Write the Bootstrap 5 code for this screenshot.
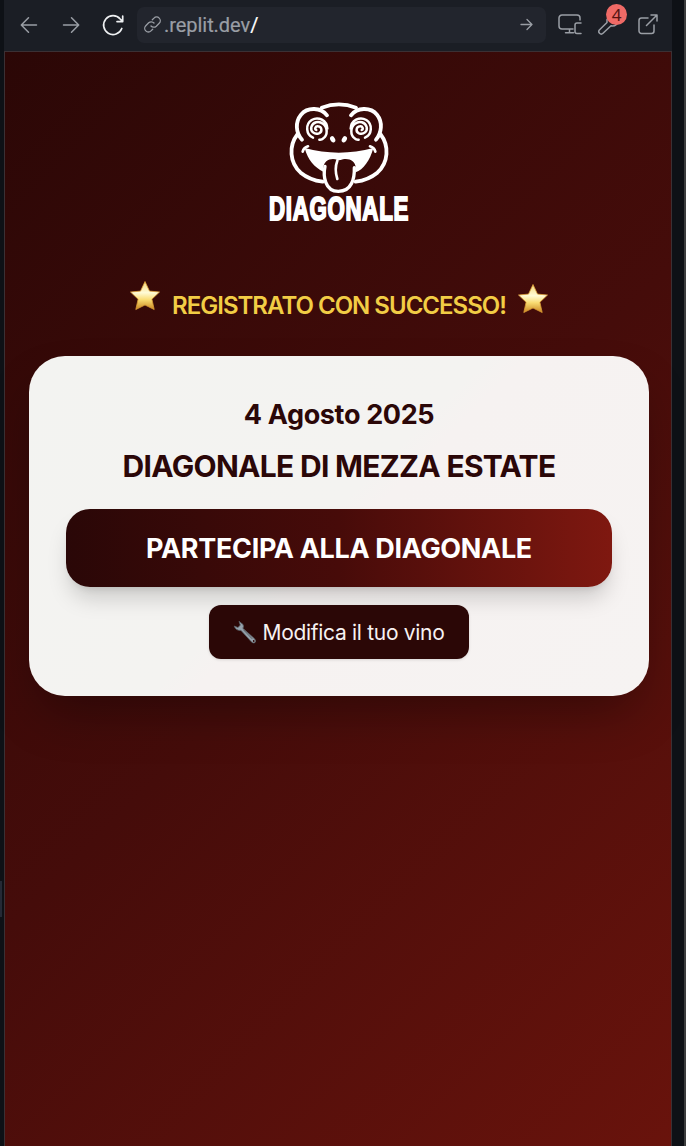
<!DOCTYPE html>
<html lang="it">
<head>
<meta charset="utf-8">
<meta name="viewport" content="width=device-width, initial-scale=1">
<title>Diagonale</title>
<link href="https://cdn.jsdelivr.net/npm/bootstrap@5.3.0/dist/css/bootstrap.min.css" rel="stylesheet">
<script defer src="https://cdn.jsdelivr.net/npm/bootstrap@5.3.0/dist/js/bootstrap.bundle.min.js"></script>
<style>
body{background:#0e1116;font-family:Inter,"Liberation Sans",sans-serif;height:1146px;overflow:hidden;border-right:2px solid #3c3d3e}
.edge{width:4px}
.handle{margin-top:881px;height:36px;width:2px;background:#252a36}
.pane{width:668px;height:1146px}
.bar{height:51px;background:#1b1e25;color:#9a9ea5;padding-bottom:2px}
.bar svg{display:block;fill:none;stroke:currentColor;stroke-width:1.5;stroke-linecap:round;stroke-linejoin:round}
.back{margin-left:16px}
.fwd{margin-left:24px}
.reload{margin-left:21px;color:#eef0f2}
.devices{margin-left:12px}
.tools{margin-left:15px}
.popout{margin-left:18px}
.addr{margin-left:12px;width:409px;height:36px;background:#22252d;border-radius:7px;padding:0 13px 0 7px}
.url{font:20px/36px Roboto,"Liberation Sans",sans-serif;letter-spacing:-.05px;margin-left:3px;-webkit-text-stroke:.2px}
.count{position:absolute;left:8px;top:-11px;width:21px;height:21px;border-radius:50%;background:#ef6a66;color:#541412;font:17px/21px "Noto Sans",sans-serif;text-align:center}
.page{background:linear-gradient(135deg,#2b0706 0%,#450c0a 50%,#69130c 100%);border:1px solid #3b3034;border-bottom:0;padding:38px 22px 0 24px}
.logo{display:block;margin:0 auto;width:170px;height:145px}
.notice{height:60px;margin-top:36px;color:#f2cd45;font-weight:600;font-size:24px;line-height:36px;letter-spacing:-1px;padding-top:17px}
.star{width:32px;height:32px}
.star-l{margin:-8px 11px 0 0}
.star-r{margin:-5px 0 0 11px}
.event{height:340px;margin-top:25px;border-radius:36px;background:linear-gradient(135deg,#f3f3f1 0%,#f4f3f1 48%,#f6f2f1 52%,#f6f3f2 100%);color:#2b0708;padding:41px 37px 0;box-shadow:0 25px 50px -12px rgba(0,0,0,.34)}
.date{font-size:27px;line-height:36px;font-weight:700;letter-spacing:-.35px}
.ttl{font-size:30px;line-height:42px;font-weight:700;letter-spacing:-.7px;margin-top:12px}
.join{height:78px;margin-top:22px;padding-top:2px;border-radius:24px;background:linear-gradient(90deg,#2a0707,#470b09 50%,#7f1810);color:#fff;font-weight:700;font-size:27px;letter-spacing:-.33px;box-shadow:0 15px 22px -4px rgba(0,0,0,.17),0 6px 9px -6px rgba(0,0,0,.15)}
.edit{width:260px;height:54px;margin:18px auto 0;padding-top:2px;border-radius:12px;background:#2b0706;color:#f7f2f2;font-size:21px;letter-spacing:-.3px;box-shadow:0 1px 3px rgba(0,0,0,.12)}
.spanner{margin:-3px 5px 0 0}
</style>
</head>
<body class="d-flex">
<div class="edge"><div class="handle"></div></div>
<main class="pane d-flex flex-column">
<nav class="bar d-flex align-items-center flex-shrink-0">
<svg class="back" width="18" height="18" viewBox="0 0 18 18"><path d="M16.5 9H1.5M8.5 1.8 1.3 9l7.2 7.2"/></svg>
<svg class="fwd" width="18" height="18" viewBox="0 0 18 18"><path d="M1.5 9h15M9.5 1.8 16.7 9l-7.2 7.2"/></svg>
<svg class="reload" width="24" height="24" viewBox="0 0 24 24"><path d="M20.8 15.500A9.400 9.400 0 1 1 19.200 6l2.500 2.600M21.700 3v5.600h-5.700" stroke-width="1.7"/></svg>
<div class="addr d-flex align-items-center">
<svg width="17" height="17" viewBox="0 0 17 17"><path stroke-width="1.3" d="M7 10a3.7 3.7 0 0 0 5.3.2l2.900-2.900a3.600 3.600 0 0 0-5.200-5.200L8.300 3.800M10 7a3.700 3.700 0 0 0-5.300-.2L1.800 9.700a3.600 3.600 0 0 0 5.200 5.200l1.700-1.700"/></svg>
<span class="url">.replit.dev<span class="text-white">/</span></span>
<svg class="ms-auto" width="13" height="13" viewBox="0 0 13 13"><path stroke-width="1.3" d="M1 6.500h11M7 1.500l5 5-5 5"/></svg>
</div>
<svg class="devices" width="25" height="22" viewBox="0 0 25 22"><path d="M22 6V4a3 3 0 0 0-3-3H4a3 3 0 0 0-3 3v8a3 3 0 0 0 3 3h11M11.500 15v3.500M7.500 18.700h8M23 9h-4a2 2 0 0 0-2 2v6.500a2 2 0 0 0 2 2h4"/></svg>
<div class="tools position-relative">
<svg width="22" height="20" viewBox="0 0 22 20"><path d="M9 4.500v3L1.600 14.800a2.400 2.400 0 0 0 3.400 3.500l8-7.500c4 .6 6-1.300 6.500-4"/></svg>
<span class="count">4</span>
</div>
<svg class="popout" width="20" height="21" viewBox="0 0 20 21"><path d="M10 4H3.500A2.500 2.500 0 0 0 1 6.500v10.500a2.500 2.500 0 0 0 2.500 2.500h10a2.500 2.500 0 0 0 2.500-2.500v-6M8.500 11.500 19 1M13 1h6v6"/></svg>
</nav>
<section class="page flex-grow-1 text-center">
<svg class="logo" viewBox="-3 0 510 435" fill="none" stroke="#fff" stroke-width="11.5" stroke-linecap="round" stroke-linejoin="round">
<path d="M200 53Q252 33 303 53"/>
<path d="M216 76C198 52 158 50 138 74C120 96 122 128 141 149M288 76C306 52 346 50 366 74C384 96 380 128 363 149"/>
<path d="M128 132C100 168 104 218 137 248Q164 270 203 275M376 132C404 168 400 218 367 248Q340 270 302 275"/>
<g stroke-width="7.5">
<path d="M184 120C178 117 181 108 189 109C201 110 203 125 192 130C178 135 166 124 169 111C173 96 191 91 204 101C218 112 219 135 205 145Q200 150 193 149M217 116C216 91 190 78 170 90C150 103 153 134 174 143"/>
<path d="M320 120C326 117 323 108 315 109C303 110 301 125 312 130C326 135 338 124 335 111C331 96 313 91 300 101C286 112 285 135 299 145Q304 150 311 149M287 116C288 91 314 78 334 90C354 103 351 134 330 143"/></g>
<g fill="#fff" stroke="none"><ellipse cx="233" cy="148" rx="7" ry="10" transform="rotate(-30 233 148)"/><ellipse cx="268" cy="148" rx="7" ry="10" transform="rotate(30 268 148)"/>
<path d="M149 174Q251 202 355 174C345 211 325 239 302 247V233C302 213 282 204 264 208Q252 212 247 210C230 202 205 211 205 235V245C178 232 159 211 149 174Z"/></g>
<path stroke-width="8" d="M143 185Q146 173 159 169M361 185Q358 173 345 169"/>
<path stroke-width="10" d="M210 229C204 257 209 304 250 304C291 304 299 264 298 233"/>
<path stroke-width="8" d="M247 212C242 225 241 248 247 267"/>
<text transform="translate(42 391) scale(.69 1)" font-family="Liberation Sans, sans-serif" font-size="97" letter-spacing="3" font-weight="700" fill="#fff" stroke-width="6" stroke-linejoin="miter">DIAGONALE</text>
</svg>
<svg width="0" height="0" class="position-absolute"><defs><linearGradient id="gold" x2="0" y2="1"><stop offset="0" stop-color="#f6d878"/><stop offset=".4" stop-color="#fffbd6"/><stop offset=".65" stop-color="#f9dc72"/><stop offset="1" stop-color="#ca8721"/></linearGradient>
<path id="st" d="m16 1.500 4.500 9.600 10 .9-7.600 7.200 2.300 10.300L16 25l-9.200 4.500 2.300-10.300L1.500 12l10-.9z" fill="url(#gold)" stroke="#d99b35" stroke-width=".8" stroke-linejoin="round"/></defs></svg>
<div class="notice d-flex justify-content-center"><svg class="star star-l"><use href="#st"/></svg><span>REGISTRATO CON SUCCESSO!</span><svg class="star star-r"><use href="#st"/></svg></div>
<div class="event">
<div class="date">4 Agosto 2025</div>
<div class="ttl">DIAGONALE DI MEZZA ESTATE</div>
<div class="join d-flex align-items-center justify-content-center">PARTECIPA ALLA DIAGONALE</div>
<div class="edit d-flex align-items-center justify-content-center">
<svg width="24" height="24" viewBox="0 0 24 24" class="spanner"><path d="M6 1.300 10 4.500Q11 7 9.800 8.300L21.500 18.700Q23.800 21.300 21.600 22.800Q20 23.500 18.300 21.700L8 10.400Q3 11 1.200 6.100L5 7.600 7.300 5.100Z" fill="#96a2ac" stroke="#5c6167" stroke-width=".8"/><path d="m10.500 9.800 8.700 9" stroke="#555b61"/><circle cx="20.700" cy="21" r=".9" fill="#2b0706"/></svg>
<span>Modifica il tuo vino</span></div>
</div>
</section>
</main>
</body>
</html>
